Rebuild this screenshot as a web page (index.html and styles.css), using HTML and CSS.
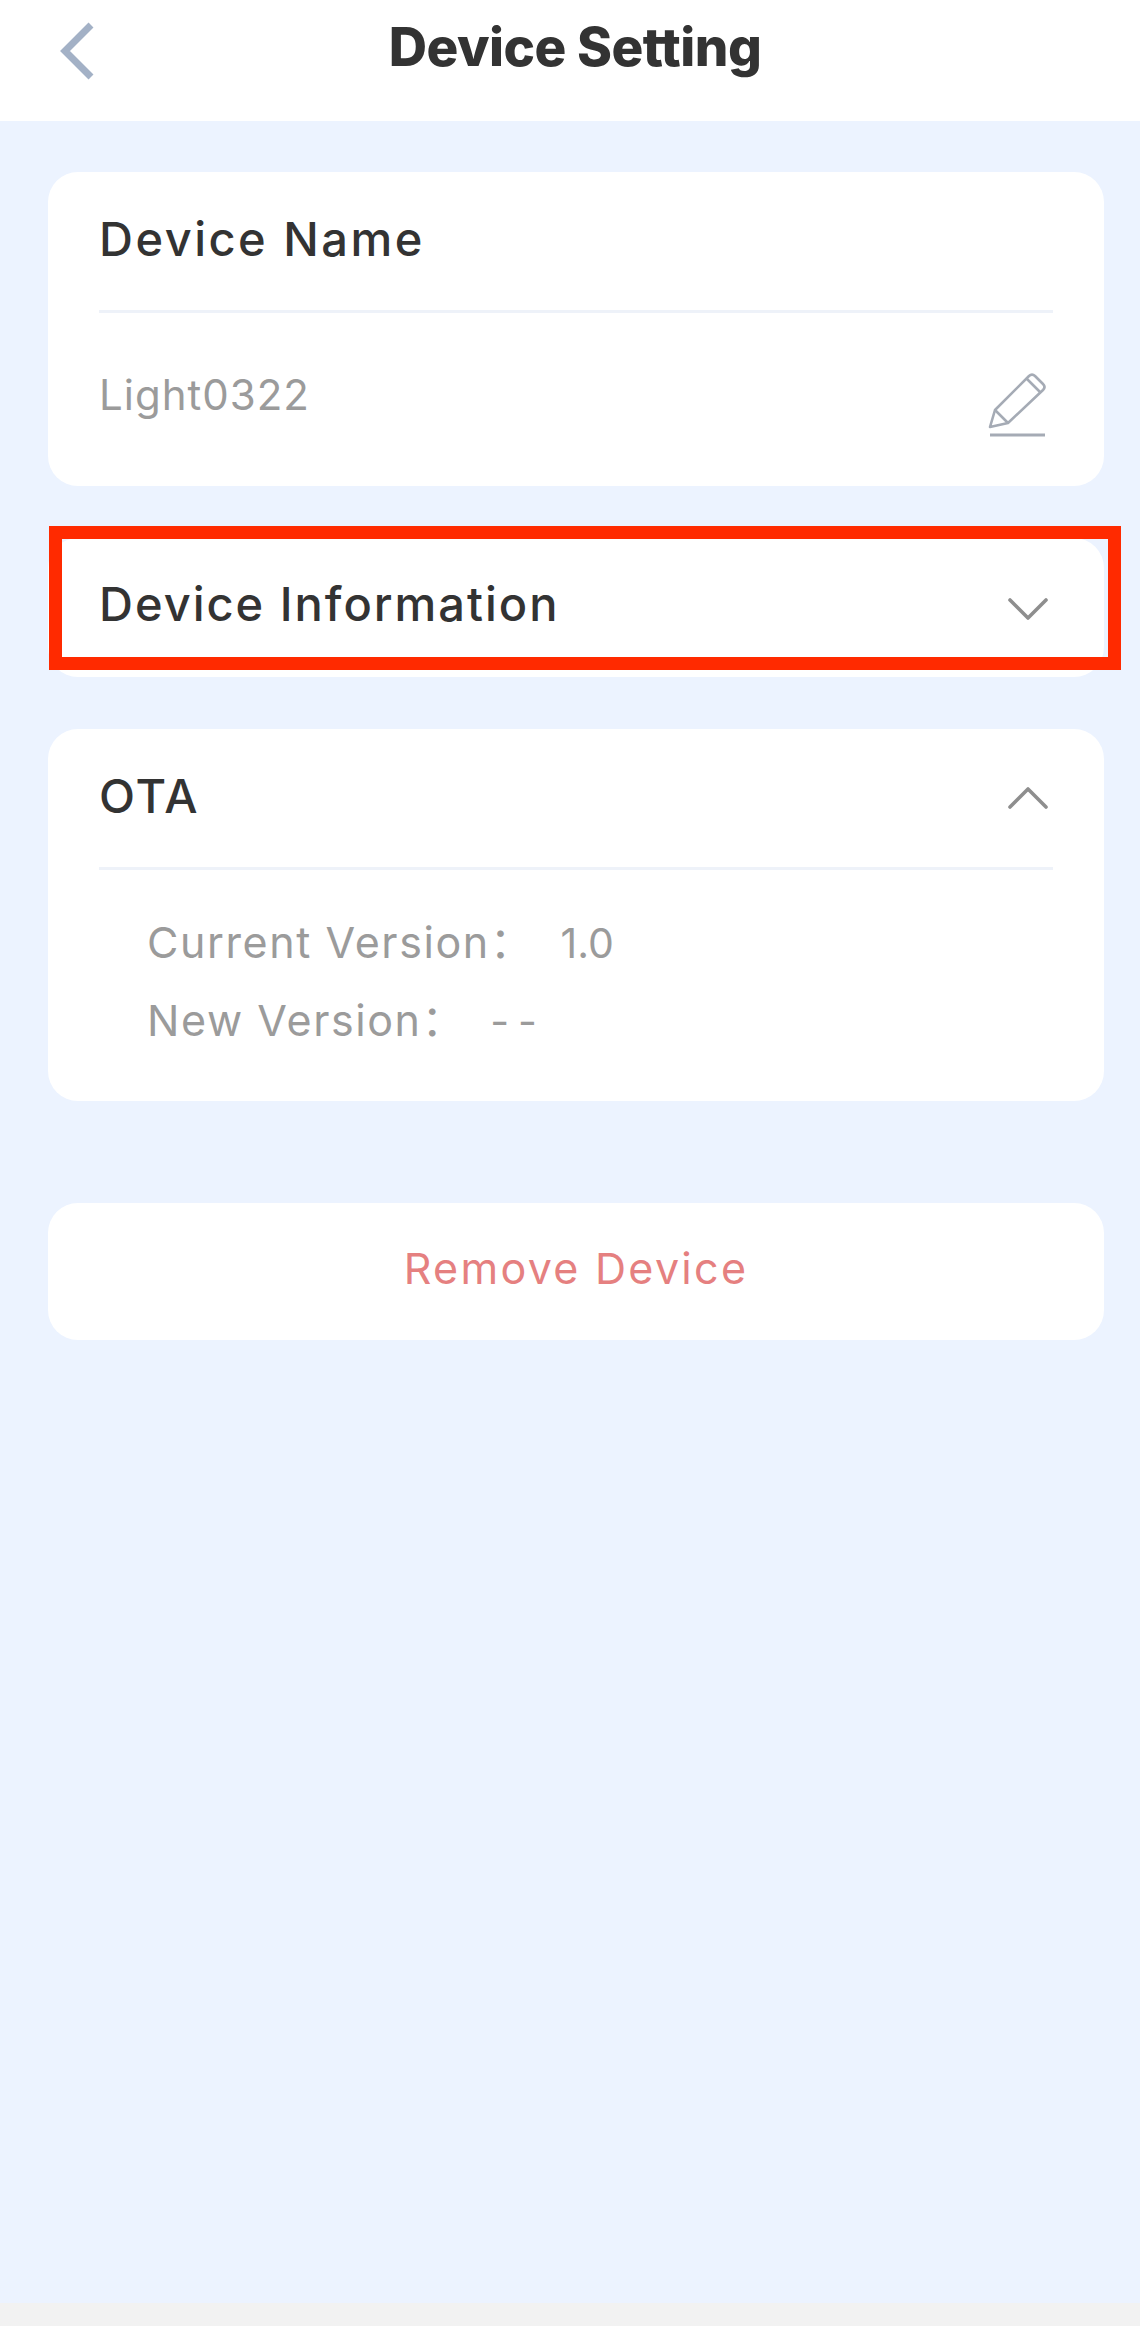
FILE: index.html
```html
<!DOCTYPE html>
<html lang="en">
<head>
    <meta charset="UTF-8">
    <title>Device Setting</title>
    <link rel="stylesheet" href="styles.css">
</head>
<body>
    <header class="top-bar">
        <svg class="back-icon" width="34" height="58" viewBox="0 0 34 58">
            <path d="M31 3 L5 29 L31 55" fill="none" stroke="#a3b1c6" stroke-width="7"/>
        </svg>
        <h1>Device Setting</h1>
    </header>

    <main class="content">
        <section class="card">
            <div class="card-head name-head">Device Name</div>
            <div class="name-row">
                <span class="name-value">Light0322</span>
                <!-- pencil with line under it -->
                <svg class="edit-icon" width="60" height="66" viewBox="0 0 60 66">
                    <path d="M3 56 L8 39 L42 5 Q45 2 48 5 L56 13 Q59 16 56 19 L21 52 Z" fill="none" stroke="#a5abb5" stroke-width="2.6" stroke-linejoin="round"/>
                    <path d="M8 39 L21 52 M40 8 L53 21" fill="none" stroke="#a5abb5" stroke-width="2.6"/>
                    <path d="M3 64 H58" fill="none" stroke="#a5abb5" stroke-width="3"/>
                </svg>
            </div>
        </section>

        <section class="card info-card">
            <div class="card-head no-line">
                <span>Device Information</span>
                <svg class="arrow" width="42" height="26" viewBox="0 0 42 26">
                    <path d="M3 4 L21 22 L39 4" fill="none" stroke="#8e8e8e" stroke-width="3.6" stroke-linecap="round" stroke-linejoin="round"/>
                </svg>
            </div>
            <div class="highlight"></div>
        </section>

        <section class="card ota-card">
            <div class="card-head">
                <span>OTA</span>
                <svg class="arrow" width="42" height="26" viewBox="0 0 42 26">
                    <path d="M3 22 L21 4 L39 22" fill="none" stroke="#8e8e8e" stroke-width="3.6" stroke-linecap="round" stroke-linejoin="round"/>
                </svg>
            </div>
            <div class="version-list">
                <p><span class="version-label current">Current Version：</span><span class="version-value">1.0</span></p>
                <p><span class="version-label latest">New Version：</span><span class="version-value dashes">--</span></p>
            </div>
        </section>

        <button class="card remove-btn">Remove Device</button>
    </main>
</body>
</html>
```

FILE: styles.css
```css
* {
    box-sizing: border-box;
}
html, body {
    height: 100%;
}
body {
    margin: 0;
    background-color: #f2f2f2;
    color: #333333;
    font-family: 'Inter', 'Noto Sans CJK SC', sans-serif;
    display: flex;
    flex-direction: column;
}

.top-bar {
    height: 121px;
    background-color: #ffffff;
    display: flex;
    align-items: flex-start;
    justify-content: center;
    position: relative;
}
.top-bar h1 {
    margin: 0;
    padding: 17px 0 0 10px;
    font-size: 53px;
    line-height: 60px;
    font-weight: 800;
    letter-spacing: -0.5px;
}
.back-icon {
    position: absolute;
    left: 60px;
    top: 22px;
}

.content {
    height: 2182px;
    background-color: #ecf3ff;
    padding: 51px 36px 0 48px;
}

.card {
    display: block;
    width: 100%;
    background-color: #ffffff;
    border-radius: 30px;
    margin-bottom: 52px;
}
.card-head {
    height: 141px;
    margin: 0 51px;
    padding-bottom: 6px;
    border-bottom: 3px solid #eef2f9;
    display: flex;
    align-items: center;
    justify-content: space-between;
    font-size: 47px;
    font-weight: 500;
    letter-spacing: 2px;
}
.card-head.name-head {
    letter-spacing: 2.5px;
}
.card-head.no-line {
    height: 139px;
    padding-bottom: 8px;
    border-bottom: none;
}
.arrow {
    margin-right: 4px;
    margin-top: 6px;
}
.no-line .arrow {
    margin-top: 10px;
}

.name-row {
    height: 173px;
    margin: 0 51px;
    padding-top: 56px;
    display: flex;
    justify-content: space-between;
    font-size: 42px;
    letter-spacing: 1px;
    color: #9b9b9b;
}
.name-value {
    line-height: 52px;
}
.edit-icon {
    margin-right: 6px;
    margin-top: 2px;
}

.info-card {
    position: relative;
}
/* red marker box drawn on top of the screenshot */
.highlight {
    position: absolute;
    left: 1px;
    right: -17px;
    top: -12px;
    bottom: 7px;
    border: 13px solid #ff2a00;
}

.ota-card {
    height: 372px;
    margin-bottom: 102px;
}
.version-list {
    padding: 46px 0 0 99px;
    font-size: 43px;
    color: #9b9b9b;
}
.version-list p {
    margin: 0 0 25px;
    line-height: 52px;
}
.version-label {
    letter-spacing: 1.6px;
}
.version-label.current {
    margin-right: 26px;
}
.version-label.latest {
    margin-right: 24px;
}
.version-value {
    font-size: 41px;
}
.version-value.dashes {
    letter-spacing: 9px;
}

.remove-btn {
    height: 137px;
    border: none;
    padding: 0 0 8px;
    font-family: inherit;
    font-size: 43px;
    letter-spacing: 2.3px;
    color: #e58080;
    text-align: center;
}
```
